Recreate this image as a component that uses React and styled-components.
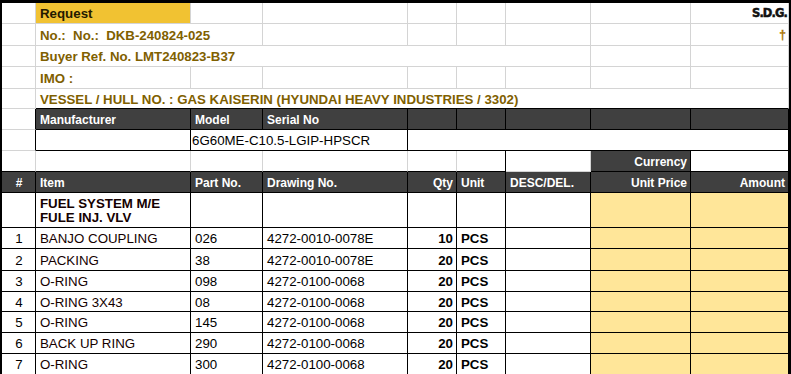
import React from "react";
import styled, { createGlobalStyle } from "styled-components";

const GRID = "#d4d4d4";
const INK = "#000";
const DARK = "#404040";
const GOLD_TEXT = "#7f6000";
const YELLOW = "#ffe699";

const Global = createGlobalStyle`
  html, body { margin: 0; padding: 0; background: #fff; }
  body { font-family: "Liberation Sans", Arial, sans-serif; }
`;

const Page = styled.div`
  width: 791px;
  height: 374px;
  box-sizing: border-box;
  border-top: 3px solid #000;
  border-left: 2px solid #000;
  border-right: 2px solid #000;
  overflow: hidden;
  background: #fff;
`;

const Sheet = styled.div`
  display: grid;
  grid-template-columns: 34px 155px 72px 145px 49px 49px 85px 100px 98px;
  grid-template-rows: 21px 22px 21px 22px 20px 21px 21px 21px 21px 35px 21px 22px 21px 20px 21px 21px 21px;
`;

const Cell = styled.div`
  grid-column: span ${(p) => p.$span || 1};
  box-sizing: border-box;
  display: flex;
  align-items: center;
  justify-content: ${(p) =>
    p.$align === "right" ? "flex-end" : p.$align === "center" ? "center" : "flex-start"};
  padding: 2px 3px 0 ${(p) => (p.$tight ? 1 : 4)}px;
  background: ${(p) => p.$bg || "#fff"};
  border-right: 1px solid ${(p) => p.$rc || GRID};
  border-bottom: 1px solid ${(p) => p.$bc || GRID};
  color: ${(p) => p.$color || "#000"};
  font-size: 13.3px;
  line-height: 14px;
  font-weight: ${(p) => (p.$bold ? 700 : 400)};
  white-space: pre;
  overflow: hidden;
`;

const InfoCell = styled(Cell).attrs({ $color: GOLD_TEXT, $bold: true })`
  font-size: 13.25px;
`;

const RequestCell = styled(Cell)`
  background: #f1c232;
  color: #241a00;
  font-weight: 700;
`;

const Mark = styled(Cell)`
  justify-content: flex-end;
  padding-right: 1px;
  padding-bottom: 2px;
  font-family: "DejaVu Sans", sans-serif;
  font-weight: 700;
  font-size: 11.5px;
  letter-spacing: -0.9px;
  -webkit-text-stroke: 0.5px #111;
  color: #111;
`;

const Cross = styled(Cell)`
  justify-content: flex-end;
  padding-right: 2px;
  padding-bottom: 1px;
  font-size: 12px;
  font-weight: 700;
  color: #a87400;
  -webkit-text-stroke: 0.3px #a87400;
`;

const HeadCell = styled(Cell)`
  background: ${DARK};
  color: #fff;
  font-size: 12px;
  font-weight: 700;
  border-right-color: ${INK};
  border-bottom-color: ${INK};
`;

const DataCell = styled(Cell)`
  border-right-color: ${INK};
  border-bottom-color: ${INK};
`;

const PriceCell = styled(DataCell)`
  background: ${YELLOW};
`;

const items = [
  ["1", "BANJO COUPLING", "026", "4272-0010-0078E", "10"],
  ["2", "PACKING", "38", "4272-0010-0078E", "20"],
  ["3", "O-RING", "098", "4272-0100-0068", "20"],
  ["4", "O-RING 3X43", "08", "4272-0100-0068", "20"],
  ["5", "O-RING", "145", "4272-0100-0068", "20"],
  ["6", "BACK UP RING", "290", "4272-0100-0068", "20"],
  ["7", "O-RING", "300", "4272-0100-0068", "20"],
];

function ItemRow({ no, name, part, drawing, qty }) {
  return (
    <>
      <DataCell $align="center">{no}</DataCell>
      <DataCell $color="#140000">{name}</DataCell>
      <DataCell>{part}</DataCell>
      <DataCell>{drawing}</DataCell>
      <DataCell $align="right" $bold>{qty}</DataCell>
      <DataCell $bold>PCS</DataCell>
      <DataCell />
      <PriceCell />
      <PriceCell />
    </>
  );
}

export default function App() {
  return (
    <>
      <Global />
      <Page>
        <Sheet>
          {/* row 1 */}
          <Cell />
          <RequestCell>Request</RequestCell>
          <Cell />
          <Cell />
          <Cell />
          <Cell />
          <Cell />
          <Cell />
          <Mark>S.D.G.</Mark>

          {/* row 2 */}
          <Cell />
          <InfoCell $span={2}>{"No.:  No.:  DKB-240824-025"}</InfoCell>
          <Cell />
          <Cell />
          <Cell />
          <Cell />
          <Cell />
          <Cross>†</Cross>

          {/* row 3 */}
          <Cell />
          <InfoCell $span={6}>Buyer Ref. No. LMT240823-B37</InfoCell>
          <Cell />
          <Cell />

          {/* row 4 */}
          <Cell />
          <InfoCell>IMO :</InfoCell>
          <Cell />
          <Cell />
          <Cell />
          <Cell />
          <Cell />
          <Cell />
          <Cell />

          {/* row 5 */}
          <Cell />
          <InfoCell $span={8} $bc={INK}>
            VESSEL / HULL NO. : GAS KAISERIN (HYUNDAI HEAVY INDUSTRIES / 3302)
          </InfoCell>

          {/* row 6 */}
          <Cell $rc={INK} />
          <HeadCell>Manufacturer</HeadCell>
          <HeadCell>Model</HeadCell>
          <HeadCell>Serial No</HeadCell>
          <HeadCell />
          <HeadCell />
          <HeadCell />
          <HeadCell />
          <HeadCell />

          {/* row 7 */}
          <Cell $rc={INK} />
          <DataCell />
          <DataCell $span={2} $tight>6G60ME-C10.5-LGIP-HPSCR</DataCell>
          <DataCell $span={5} />

          {/* row 8 */}
          <Cell $bc={INK} />
          <Cell $bc={INK} />
          <Cell $bc={INK} />
          <Cell $bc={INK} />
          <Cell $bc={INK} />
          <Cell $bc={INK} $rc={INK} />
          <Cell />
          <HeadCell $align="right">Currency</HeadCell>
          <DataCell />

          {/* row 9 header */}
          <HeadCell $align="center">#</HeadCell>
          <HeadCell>Item</HeadCell>
          <HeadCell>Part No.</HeadCell>
          <HeadCell>Drawing No.</HeadCell>
          <HeadCell $align="right">Qty</HeadCell>
          <HeadCell>Unit</HeadCell>
          <HeadCell>DESC/DEL.</HeadCell>
          <HeadCell $align="right">Unit Price</HeadCell>
          <HeadCell $align="right">Amount</HeadCell>

          {/* row 10 group */}
          <DataCell />
          <DataCell $bold $color="#140000">
            {"FUEL SYSTEM M/E\nFULE INJ. VLV"}
          </DataCell>
          <DataCell />
          <DataCell />
          <DataCell />
          <DataCell />
          <DataCell />
          <PriceCell />
          <PriceCell />

          {items.map(([no, name, part, drawing, qty]) => (
            <ItemRow key={no} no={no} name={name} part={part} drawing={drawing} qty={qty} />
          ))}
        </Sheet>
      </Page>
    </>
  );
}
